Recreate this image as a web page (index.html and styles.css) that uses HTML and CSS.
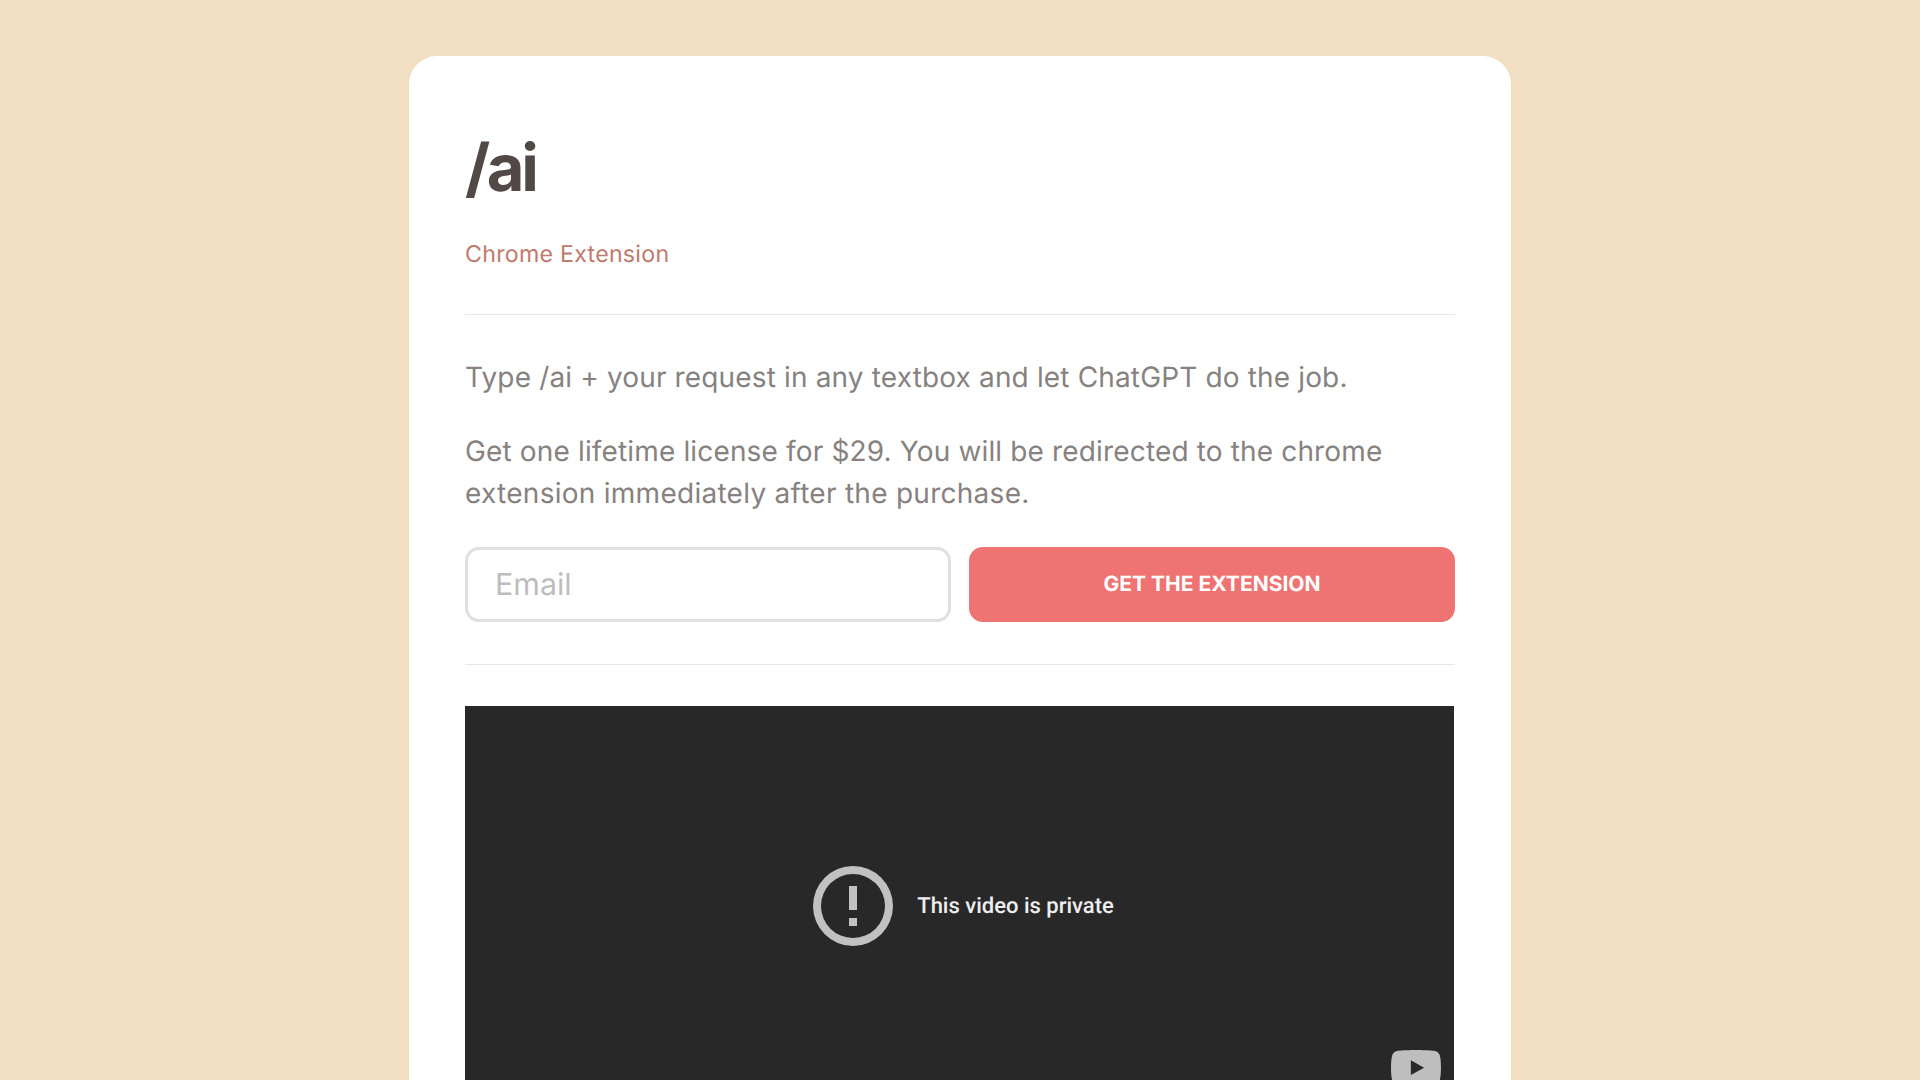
FILE: index.html
```
<!DOCTYPE html>
<html lang="en">
<head>
<meta charset="utf-8">
<title>/ai</title>
<link rel="stylesheet" href="styles.css">
</head>
<body>
<main class="card">
  <h1 class="title">/ai</h1>
  <p class="tagline">Chrome Extension</p>
  <div class="intro">
    <p class="copy">Type /ai + your request in any textbox and let ChatGPT do the job.</p>
    <p class="copy">Get one lifetime license for $29. You will be redirected to the chrome <span class="nowrap">extension immediately after the purchase.</span></p>
  </div>
  <form class="signup">
    <input class="email" type="email" placeholder="Email" aria-label="Email">
    <button class="buy" type="button">GET THE EXTENSION</button>
  </form>
  <div class="media">
    <section class="video">
      <div class="notice">
        <svg class="alert" viewBox="2 2 20 20" aria-hidden="true"><path d="M11 15h2v2h-2zm0-8h2v6h-2zm1-5a10 10 0 1 0 0 20 10 10 0 0 0 0-20zm0 18a8 8 0 1 1 0-16 8 8 0 0 1 0 16z"/></svg>
        <span class="message">This video is private</span>
      </div>
      <svg class="youtube" viewBox="0 0 68 48" aria-hidden="true"><path fill-rule="evenodd" d="M66.52 7.74c-.78-2.93-2.49-5.41-5.42-6.19C55.79.13 34 0 34 0S12.21.13 6.9 1.55c-2.93.78-4.63 3.26-5.42 6.19C.06 13.05 0 24 0 24s.06 10.95 1.48 16.26c.78 2.93 2.49 5.41 5.42 6.19C12.21 47.87 34 48 34 48s21.79-.13 27.1-1.55c2.93-.78 4.64-3.26 5.42-6.19C67.94 34.95 68 24 68 24s-.06-10.95-1.48-16.26zM45 24 27 14v20z"/></svg>
    </section>
  </div>
</main>
</body>
</html>
```
FILE: styles.css
```
* { box-sizing: border-box; }

body {
  margin: 0;
  height: 100vh;
  overflow: hidden;
  padding-top: 56px;
  background: #f1dfc3;
  font-family: Inter, "Liberation Sans", sans-serif;
  text-rendering: geometricPrecision;
}

.card {
  width: 1102px;
  height: 100%;
  margin: 0 auto;
  padding: 73px 56px 0;
  border-radius: 28px 28px 0 0;
  background: #fff;
  overflow: hidden;
}

.title {
  margin: 0;
  font-size: 65px;
  font-weight: 700;
  line-height: 78px;
  letter-spacing: -3.4px;
  color: #524845;
}

.tagline {
  margin: 29px 0 0;
  font-size: 23.2px;
  line-height: 36px;
  letter-spacing: 0.25px;
  color: #be7b6e;
}

.intro {
  margin-top: 42px;
  padding-top: 41px;
  border-top: 1px solid #e6e6e6;
}

.copy {
  margin: 0 0 32px;
  font-size: 28px;
  line-height: 42px;
  letter-spacing: 0.15px;
  color: #87827f;
}

.nowrap {
  white-space: nowrap;
  letter-spacing: 0.27px;
}

.signup {
  display: grid;
  grid-template-columns: 1fr 1fr;
  gap: 18px;
  height: 75px;
  margin-top: 33px;
}

.email {
  min-width: 0;
  padding: 0 27px;
  border: 3px solid #e0e0e0;
  border-radius: 14px;
  background: #fff;
  font: 400 30.4px Inter, sans-serif;
  text-rendering: inherit;
}

.email::placeholder { color: #bdbdbd; }

.buy {
  padding: 0 0 1px;
  border: 0;
  border-radius: 14px;
  background: #ef7373;
  color: #fff;
  font: 700 21px Inter, sans-serif;
  text-rendering: inherit;
}

.media {
  margin-top: 42px;
  padding-top: 41px;
  border-top: 1px solid #e6e6e6;
}

.video {
  position: relative;
  display: flex;
  align-items: center;
  justify-content: center;
  width: 989px;
  height: 400px;
  background: #282828;
}

.notice {
  display: flex;
  align-items: center;
  gap: 24px;
  margin-left: 8px;
  font: 500 22px/30px Roboto, sans-serif;
  color: #eee;
}

.message { padding-top: 2px; }

.alert {
  width: 80px;
  height: 80px;
  fill: #c1c1c1;
}

.youtube {
  position: absolute;
  right: 13px;
  top: 344px;
  width: 50px;
  height: 35.3px;
  fill: #bebebe;
}
```
